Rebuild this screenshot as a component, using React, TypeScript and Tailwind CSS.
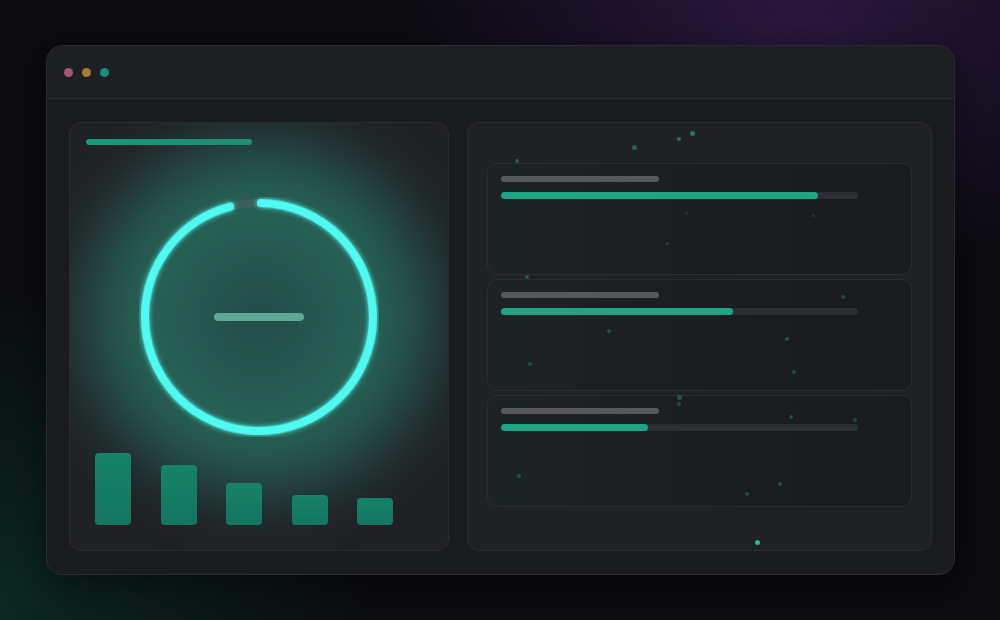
import React from "react";

// Progress rows on the right-hand panel, fill as a fraction of the track
const rows = [0.888, 0.65, 0.412];

// Bar chart heights, px
const bars = [72, 60, 42, 30, 27];

// Faint particles scattered over the right panel: [x, y, size, opacity]
const particles: [number, number, number, number][] = [
  [634, 147, 5, 0.45],
  [679, 139, 4, 0.5],
  [692, 133, 5, 0.55],
  [517, 161, 4, 0.4],
  [527, 277, 4, 0.35],
  [609, 331, 4, 0.3],
  [667, 243, 3, 0.25],
  [686, 213, 3, 0.2],
  [813, 215, 3, 0.2],
  [787, 339, 4, 0.35],
  [794, 372, 4, 0.3],
  [843, 297, 4, 0.3],
  [530, 364, 4, 0.3],
  [679, 397, 5, 0.35],
  [679, 404, 4, 0.3],
  [791, 417, 4, 0.3],
  [855, 420, 4, 0.3],
  [519, 476, 4, 0.3],
  [747, 494, 4, 0.3],
  [780, 484, 4, 0.35],
  [757, 542, 5, 0.95],
];

const Ring = () => {
  const r = 114;
  const c = 2 * Math.PI * r;
  const arc = (344 / 360) * c;
  return (
    <div className="relative w-[240px] h-[240px]">
      <div className="absolute -inset-[95px] rounded-full blur-[18px] bg-[radial-gradient(circle,rgba(36,92,84,0.7)_0%,rgba(42,128,110,0.7)_38%,rgba(42,128,110,0.45)_52%,rgba(36,90,82,0.15)_66%,rgba(30,60,58,0)_78%)]" />
      <svg width="240" height="240" viewBox="0 0 240 240" className="relative">
        <defs>
          <filter id="glow" x="-20%" y="-20%" width="140%" height="140%">
            <feGaussianBlur stdDeviation="2.5" result="b" />
            <feMerge>
              <feMergeNode in="b" />
              <feMergeNode in="SourceGraphic" />
            </feMerge>
          </filter>
        </defs>
        <circle cx="120" cy="120" r={r} fill="none" stroke="#3d5f5b" strokeWidth="8" />
        <circle
          cx="120"
          cy="120"
          r={r}
          fill="none"
          stroke="#4ffaf0"
          strokeWidth="8"
          strokeLinecap="round"
          strokeDasharray={`${arc} ${c}`}
          transform="rotate(-89 120 120)"
          filter="url(#glow)"
        />
      </svg>
      <div className="absolute left-1/2 top-1/2 -translate-x-1/2 -translate-y-1/2 w-[90px] h-[8px] rounded-full bg-[#5ea898]" />
    </div>
  );
};

const App = () => {
  return (
    <div className="relative w-[1000px] h-[620px] overflow-hidden bg-[#0b0b10] bg-[radial-gradient(ellipse_400px_260px_at_800px_20px,rgba(64,32,96,0.6),transparent),radial-gradient(ellipse_380px_320px_at_0px_600px,rgba(10,70,52,0.5),transparent)] p-[45px_45px_45px_46px]">
      <div className="h-[530px] w-[909px] rounded-2xl border border-[#2a2b30] bg-[#1a1b1f] flex flex-col overflow-hidden shadow-[0_10px_40px_rgba(0,0,0,0.5)]">
        <div className="h-[53px] shrink-0 flex items-center gap-[9px] px-[17px] bg-[#1e1f23] border-b border-[#2c2d32]">
          <span className="w-[9px] h-[9px] rounded-full bg-[#a3566f]" />
          <span className="w-[9px] h-[9px] rounded-full bg-[#a27c33]" />
          <span className="w-[9px] h-[9px] rounded-full bg-[#10917a]" />
        </div>
        <div className="flex-1 flex gap-[18px] px-[22px] pt-[23px] pb-[23px]">
          <div className="w-[380px] rounded-xl border border-[#2b2c31] bg-[#202125] flex flex-col px-[16px] pt-[16px] pb-[25px] overflow-hidden">
            <div className="w-[166px] h-[6px] rounded-full bg-[#1a9a78]" />
            <div className="flex justify-center mt-[52px]">
              <Ring />
            </div>
            <div className="relative flex items-end gap-[29.5px] mt-auto pl-[9px]">
              {bars.map((h, i) => (
                <div
                  key={i}
                  className="w-[36px] rounded-[4px] bg-[linear-gradient(180deg,#168266,#137660)]"
                  style={{ height: h }}
                />
              ))}
            </div>
          </div>
          <div className="flex-1 rounded-xl border border-[#2b2c31] bg-[#202125] flex flex-col gap-[4px] px-[19px] pt-[40px]">
            {rows.map((p, i) => (
              <div
                key={i}
                className="h-[112px] rounded-[10px] border border-[#2a2c31] bg-[linear-gradient(90deg,#1d2324,#1b1c20_60%,#1a1b1f)] px-[13px] pt-[12px]"
              >
                <div className="w-[158px] h-[6px] rounded-full bg-[#55585c]" />
                <div className="mt-[10px] w-[357px] h-[7px] rounded-full bg-[#2c2e33]">
                  <div
                    className="h-full rounded-full bg-[#1fa584]"
                    style={{ width: `${p * 100}%` }}
                  />
                </div>
              </div>
            ))}
          </div>
        </div>
      </div>
      {particles.map(([x, y, s, o], i) => (
        <span
          key={i}
          className="absolute rounded-full bg-[#20c48f]"
          style={{ left: x - s / 2, top: y - s / 2, width: s, height: s, opacity: o }}
        />
      ))}
    </div>
  );
};

export default App;
